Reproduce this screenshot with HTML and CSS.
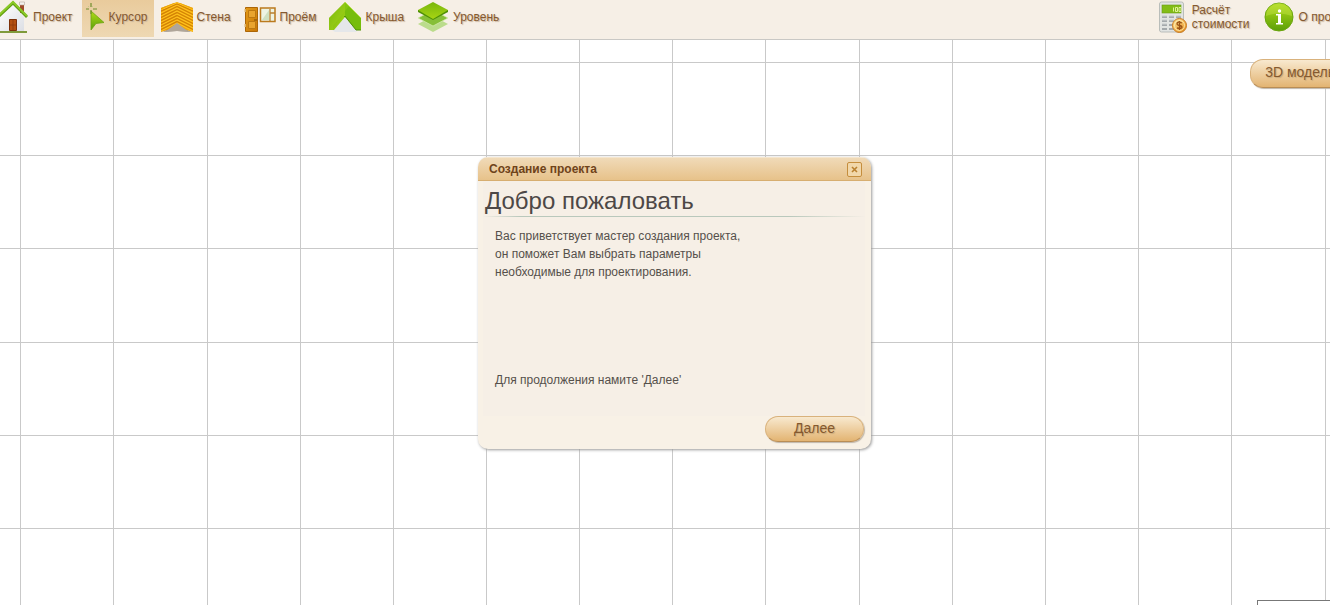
FILE: index.html
```html
<!DOCTYPE html>
<html lang="ru">
<head>
<meta charset="utf-8">
<title>Создание проекта</title>
<link rel="stylesheet" href="styles.css">
</head>
<body>
<svg width="0" height="0" class="defs" aria-hidden="true">
  <defs>
    <linearGradient id="green" x1="0" y1="0" x2="0" y2="1"><stop offset="0" stop-color="#b2dc18"/><stop offset="1" stop-color="#5b9f09"/></linearGradient>
    <linearGradient id="leaf" x1="0" y1="0" x2="1" y2="1"><stop offset="0" stop-color="#65a80b"/><stop offset="1" stop-color="#a9d916"/></linearGradient>
    <linearGradient id="sheet" x1="0" y1="0" x2="0" y2="1"><stop offset="0" stop-color="#78b60c"/><stop offset="1" stop-color="#a8d513"/></linearGradient>
    <linearGradient id="wood" x1="0" y1="0" x2="1" y2="1"><stop offset="0" stop-color="#e39a18"/><stop offset="1" stop-color="#c97707"/></linearGradient>
    <linearGradient id="plaster" x1="0" y1="0" x2="1" y2="1"><stop offset="0" stop-color="#ffffff"/><stop offset="1" stop-color="#dcdee4"/></linearGradient>
    <linearGradient id="coin" x1="0" y1="0" x2="1" y2="1"><stop offset="0" stop-color="#ffe9a0"/><stop offset="1" stop-color="#e58b18"/></linearGradient>
  </defs>
</svg>

<header class="toolbar">
  <nav class="tools tools-main" aria-label="Инструменты">
    <button class="tool" type="button">
      <svg width="32" height="34" viewBox="0 0 32 34">
        <path d="M23 4h4v9h-4z" fill="#a04a2a"/><path d="M22.500 2h5v3h-5z" fill="#f4f2ee" stroke="#b5aaa0" stroke-width=".6"/>
        <path d="M3 17 16 5l11 12v14H3z" fill="url(#plaster)"/>
        <path d="M1 17 16 3l14 14" fill="none" stroke="#5f9c12" stroke-width="2.800"/><path d="M1 16 16 2l14 14" fill="none" stroke="#8bc926" stroke-width="2"/>
        <path d="M12.500 19.500h7v11h-7z" fill="#b4500f" stroke="#7c3009"/><path d="M16 20v10m-3-5h6" stroke="#8d3a0b" stroke-width=".8"/>
        <path d="M1 31h29v2H1z" fill="#7f9a3a"/>
      </svg>
      <span>Проект</span>
    </button>
    <button class="tool tool-active" type="button" aria-pressed="true">
      <svg width="19" height="30" viewBox="0 0 19 30">
        <path d="M5 9v19l5-6.500 8-1z" fill="url(#green)" stroke="#6da512" stroke-width=".8"/>
        <path d="M5 1v4m0 3v4M-1 7h4m4 0h4" stroke="#6f8e2d" stroke-width="1.200"/><path d="m2 4 1 1m4-1-1 1" stroke="#c6c98b"/>
      </svg>
      <span>Курсор</span>
    </button>
    <button class="tool" type="button">
      <svg width="32" height="32" viewBox="0 0 32 32">
        <path d="M2 31 16 22l14 9-14-1z" fill="#a9a097"/>
        <path d="m0 7 13-5 3 4v20L0 31z" fill="#e79a0a"/><path d="m32 7-13-5-3 4v20l16 5z" fill="#f0a80c"/>
        <path d="m0 7 16-6 16 6-16 5z" fill="#eea70e"/>
        <path d="M0 12 16 4l16 8M0 15l16-8 16 8M0 18l16-8 16 8M0 21l16-8 16 8M0 24l16-8 16 8M0 27l16-8 16 8M0 30l16-8 16 8M0 9l16-7 16 7" fill="none" stroke="#ffc421"/>
        <path d="M0 10 16 3l16 7M0 13.500l16-8 16 8M0 16.500l16-8 16 8M0 19.500l16-8 16 8M0 22.500l16-8 16 8M0 25.500l16-8 16 8M0 28.500l16-8 16 8" fill="none" stroke="#cf7e05"/>
        <path d="m4 31 12-9 12 9-12-1z" fill="#b0a69a"/>
      </svg>
      <span>Стена</span>
    </button>
    <button class="tool" type="button">
      <svg width="32" height="32" viewBox="0 0 32 32">
        <path d="M1.500 6.500h12v24h-12z" fill="url(#wood)" stroke="#ad6606"/><path d="M4.500 9.500h7v7h-7zm0 11h7v7h-7z" fill="#e9a42e" stroke="#bd7810"/>
        <path d="M1 8v3m0 12v3" stroke="#e6c88d" stroke-width="1.500"/><path d="M10 18.500h3v1h-3z" fill="#7c4c0b"/>
        <path d="M16.500 7h14.500v13.500H16.500z" fill="#edf3e3" stroke="#bb7a1e" stroke-width="1.500"/><path d="M26 8v12m0-8h5" stroke="#b98030" stroke-width="1.300"/><path d="m18 19 7-10v10z" fill="#cfe0c1"/>
      </svg>
      <span>Проём</span>
    </button>
    <button class="tool" type="button">
      <svg width="32" height="32" viewBox="0 0 32 32">
        <path d="m3 29 13-14 13 14-2 2H6z" fill="#e5e7ea"/>
        <path d="M16 1 0 17v12h5L16 16z" fill="url(#leaf)"/><path d="M16 1 32 17v12h-5L16 16z" fill="#76bd0b"/>
        <path d="m16 1 4 4L4 25v4H0V17z" fill="#a0d31a" opacity=".35"/><path d="m15 16 1-1 11 14h5" fill="none" stroke="#519109"/><path d="m16 1 16 16" stroke="#b9e14a"/>
      </svg>
      <span>Крыша</span>
    </button>
    <button class="tool" type="button">
      <svg width="32" height="32" viewBox="0 0 32 32">
        <path d="m1 23 15-8 15 8-15 8z" fill="#bbdc8c"/>
        <path d="m1 17 15-8 15 8-15 8z" fill="#86bf38" stroke="#d7edb5" stroke-width=".7"/>
        <path d="M1 9v2l15 8 15-8V9z" fill="#4e8f05"/><path d="m1 9 15-8 15 8-15 9z" fill="url(#sheet)"/>
      </svg>
      <span>Уровень</span>
    </button>
  </nav>
  <nav class="tools tools-side" aria-label="Информация">
    <button class="tool" type="button">
      <svg width="32" height="32" viewBox="0 0 32 32">
        <rect x="3.500" y="1" width="24" height="30" rx="2" fill="#e2e4e2" stroke="#b9bdba"/>
        <rect x="6" y="4" width="19" height="8" fill="#82bd16" stroke="#699a16" stroke-width=".6"/><path d="M17.500 6.500v4m2-4h2v4h-2zm3.500 0h2v4h-2z" fill="none" stroke="#eaf8a8" stroke-width=".9"/>
        <path d="M6 16h5m2 0h5m2 0h5M6 20h5m2 0h5m2 0h5M6 24h5m2 0h5M6 28h5m2 0h5" stroke="#a4a9ac" stroke-width="2"/><path d="M6 15h5m2 0h5m2 0h5M6 19h5m2 0h5M6 23h5" stroke="#c9cdce"/>
        <circle cx="23.500" cy="24.500" r="7" fill="url(#coin)" stroke="#c9791f"/><circle cx="23.500" cy="24.500" r="5" fill="none" stroke="#fff0b5" stroke-width=".8"/>
        <path d="M26 22q-5-2-5 1 0 1 2.500 1.500T26 26q0 2-5 1m2.500-7v9" fill="none" stroke="#9b5316" stroke-width="1.300"/>
      </svg>
      <span>Расчёт<br>стоимости</span>
    </button>
    <button class="tool" type="button">
      <svg width="32" height="32" viewBox="0 0 32 32">
        <circle cx="16" cy="16" r="14" fill="url(#green)" stroke="#6ba50e"/><path d="M3 15a13 13 0 0 1 26 0q-13-5-26 0" fill="#c7e650" opacity=".4"/>
        <circle cx="16.500" cy="10" r="1.700" fill="#fff"/><path d="M13 13h5v9h2v1.500h-7V22h2v-7.500h-2z" fill="#fff"/>
      </svg>
      <span>О программе</span>
    </button>
  </nav>
</header>

<main class="plan">
  <svg class="grid" width="100%" height="100%" shape-rendering="crispEdges" aria-hidden="true">
    <path fill="none" stroke="#c9c9c9" stroke-width="1" d="M20.500 0v2000M113.500 0v2000M207.500 0v2000M300.500 0v2000M393.500 0v2000M486.500 0v2000M579.500 0v2000M672.500 0v2000M765.500 0v2000M859.500 0v2000M952.500 0v2000M1045.500 0v2000M1138.500 0v2000M1231.500 0v2000M1325.500 0v2000M0 22.500h4000M0 115.500h4000M0 208.500h4000M0 302.500h4000M0 395.500h4000M0 488.500h4000"/>
  </svg>
  <button class="pill model-button" type="button">3D модель</button>
  <section class="dialog" role="dialog" aria-labelledby="dialog-title">
    <header class="dialog-bar">
      <h2 id="dialog-title" class="dialog-title">Создание проекта</h2>
      <button class="close" type="button" aria-label="Закрыть">
        <svg width="7" height="7" viewBox="0 0 7 7"><path d="m1 1 5 5m0-5L1 6" stroke="#b9802f" stroke-width="1.600"/></svg>
      </button>
    </header>
    <div class="dialog-body">
      <h1 class="welcome">Добро пожаловать</h1>
      <div class="message">
        <p>Вас приветствует мастер создания проекта,<br>он поможет Вам выбрать параметры<br>необходимые для проектирования.</p>
        <p>Для продолжения намите 'Далее'</p>
      </div>
    </div>
    <footer class="dialog-footer"><button class="pill next" type="button">Далее</button></footer>
  </section>
  <div class="corner-panel"></div>
</main>
</body>
</html>
```
FILE: styles.css
```css
* { box-sizing: border-box; }

body {
  display: flex;
  flex-direction: column;
  height: 100vh;
  margin: 0;
  overflow: hidden;
  background: #fff;
  font: 12px/14px "Liberation Sans", Arial, sans-serif;
}

h1, h2, p { margin: 0; }
button { font: inherit; cursor: pointer; }
.defs { position: absolute; }

.toolbar {
  display: flex;
  justify-content: space-between;
  height: 40px;
  flex: none;
  background: #f6efe6;
  border-bottom: 1px solid #c9c8c5;
}

.tools { display: flex; gap: 3px; height: 37px; }
.tools-main { margin-left: -7px; }
.tools-side { margin-right: -48px; }

.tool {
  display: flex;
  align-items: center;
  gap: 4px;
  padding: 0 6px 3px 4px;
  border: 0;
  background: none;
  color: #85592f;
  text-align: left;
  text-shadow: 1px 1px 1px #c9b49c;
  white-space: nowrap;
}

.tool svg { flex: none; }
.tool-active { background: linear-gradient(#e9cb9c, #eed8b3); }

.plan {
  position: relative;
  flex: 1;
  overflow: hidden;
}

.grid { display: block; }

.pill {
  border: 1px solid #d9b27c;
  border-bottom-color: #b98d55;
  border-radius: 13px;
  background: linear-gradient(#f8e9cf, #e3b472);
  box-shadow: 1px 1px 1px #bfb6aa;
  color: #85592f;
  font-size: 14px;
  line-height: 16px;
  text-shadow: 1px 1px 1px #c9a877;
  white-space: nowrap;
}

.model-button {
  position: absolute;
  top: 19px;
  right: -20px;
  height: 29px;
  padding: 0 14px 3px;
}

.dialog {
  position: absolute;
  top: 117px;
  left: calc(50% - 187px);
  display: flex;
  flex-direction: column;
  width: 393px;
  border-radius: 10px;
  overflow: hidden;
  background: #f8f1e6;
  box-shadow: 1px 1px 3px #999;
}

.dialog-bar {
  display: flex;
  align-items: center;
  justify-content: space-between;
  height: 24px;
  padding: 0 9px 0 11px;
  border-top: 1px solid #f5e6ce;
  border-bottom: 1px solid #d7ae70;
  background: linear-gradient(#f0dab8, #e7c28a);
}

.dialog-title {
  color: #6f431a;
  font-size: 12px;
  font-weight: bold;
  line-height: 14px;
}

.close {
  display: flex;
  align-items: center;
  justify-content: center;
  width: 15px;
  height: 15px;
  padding: 0;
  border: 1px solid #c58e3d;
  border-radius: 2px;
  background: #f1d7aa;
}

.dialog-body {
  min-height: 235px;
  margin: 0 6px 0 5px;
  background: #f6efe6;
}

.welcome {
  height: 36px;
  padding: 6px 0 0 2px;
  border-bottom: 1px solid;
  border-image: linear-gradient(to right, transparent, #b9c8bc 10%, #b9c8bc 80%, transparent) 1;
  color: #4d4846;
  font-size: 24px;
  font-weight: normal;
  line-height: 28px;
}

.message {
  display: flex;
  flex-direction: column;
  gap: 90px;
  padding: 10px 12px;
  color: #55504b;
  line-height: 18px;
}

.dialog-footer {
  display: flex;
  justify-content: flex-end;
  padding: 0 7px 7px;
}

.next {
  width: 99px;
  height: 26px;
  padding: 0 0 2px;
}

.corner-panel {
  position: absolute;
  right: 0;
  bottom: 0;
  width: 73px;
  height: 5px;
  border: solid #777;
  border-width: 1px 0 0 1px;
  background: #fff;
}
```
